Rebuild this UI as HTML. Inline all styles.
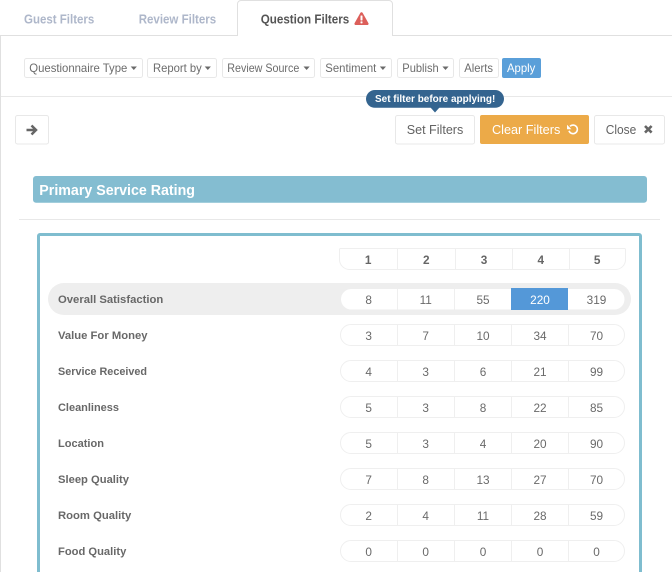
<!DOCTYPE html>
<html lang="en">
<head>
<meta charset="utf-8">
<title>Question Filters</title>
<style>
html,body{margin:0;padding:0;width:672px;height:572px;overflow:hidden;background:#fff}
svg{display:block;position:absolute;left:0;top:0}
text{font-family:"Liberation Sans",Arial,sans-serif}
.tab{font-size:13px;font-weight:700;fill:#aeb7ca}
.f{font-size:11.7px;fill:#6c6c6c}
.b{fill:#fff;stroke:#e8e8e8;stroke-width:1}
.big{font-size:13px;fill:#626262}
.l{font-size:10.8px;font-weight:700;fill:#686868}
.n{font-size:11.8px;fill:#6a6a6a;text-anchor:middle}
.h{font-size:11.8px;font-weight:700;fill:#666;text-anchor:middle}
.s{stroke:#efefef;stroke-width:1}
.p{fill:#fff;stroke:#efefef;stroke-width:1}
</style>
</head>
<body>
<svg width="672" height="572" viewBox="0 0 672 572" xmlns="http://www.w3.org/2000/svg">
<!-- tabs -->
<path d="M0.5 572V35.5H237.5V4a3.5 3.5 0 0 1 3.5-3.5H389a3.5 3.5 0 0 1 3.5 3.5V35.5H672" fill="none" stroke="#e0e0e0"/>
<text class="tab" x="24" y="23.3" textLength="70.3" lengthAdjust="spacingAndGlyphs">Guest Filters</text>
<text class="tab" x="138.7" y="23.3" textLength="77.5" lengthAdjust="spacingAndGlyphs">Review Filters</text>
<text x="260.7" y="23.3" font-size="13" font-weight="700" fill="#555" textLength="88.6" lengthAdjust="spacingAndGlyphs">Question Filters</text>
<path d="M361.500 12.300c.6 0 1 .3 1.300.8l5.600 10c.5.9-.1 1.900-1.100 1.900H355.700c-1 0-1.600-1-1.100-1.900l5.600-10c.3-.5.700-.8 1.300-.8z" fill="#dc5f5a"/>
<rect x="360.500" y="15.500" width="2" height="5" rx=".6" fill="#fff"/>
<rect x="360.500" y="21.400" width="2" height="2" rx=".5" fill="#fff"/>

<!-- filter bar -->
<rect class="b" x="24.500" y="58.500" width="118" height="19" rx="2"/>
<text class="f" x="29.300" y="72" textLength="98" lengthAdjust="spacingAndGlyphs">Questionnaire Type</text>
<path d="M130.700 66.500h6.200l-3.100 3.500z" fill="#6a6a6a"/>
<rect class="b" x="147.500" y="58.500" width="69" height="19" rx="2"/>
<text class="f" x="153" y="72" textLength="48.700" lengthAdjust="spacingAndGlyphs">Report by</text>
<path d="M204.700 66.500h6.200l-3.100 3.500z" fill="#6a6a6a"/>
<rect class="b" x="222.500" y="58.500" width="92" height="19" rx="2"/>
<text class="f" x="227.300" y="72" textLength="72" lengthAdjust="spacingAndGlyphs">Review Source</text>
<path d="M303.500 66.500h6.200l-3.100 3.500z" fill="#6a6a6a"/>
<rect class="b" x="320.500" y="58.500" width="71" height="19" rx="2"/>
<text class="f" x="325.300" y="72" textLength="51" lengthAdjust="spacingAndGlyphs">Sentiment</text>
<path d="M379.800 66.500h6.200l-3.100 3.500z" fill="#6a6a6a"/>
<rect class="b" x="397.500" y="58.500" width="56" height="19" rx="2"/>
<text class="f" x="402.300" y="72" textLength="36.400" lengthAdjust="spacingAndGlyphs">Publish</text>
<path d="M442.400 66.500h6.200l-3.100 3.500z" fill="#6a6a6a"/>
<rect class="b" x="459.500" y="58.500" width="39" height="19" rx="2"/>
<text class="f" x="464.300" y="72" textLength="28.700" lengthAdjust="spacingAndGlyphs">Alerts</text>
<rect x="502" y="58" width="39" height="20" rx="2" fill="#5a9fd9"/>
<text x="507" y="72" font-size="11.700" fill="#fff" textLength="28.300" lengthAdjust="spacingAndGlyphs">Apply</text>

<line x1="1" y1="96.500" x2="672" y2="96.500" stroke="#e8e8e8"/>

<!-- tooltip -->
<rect x="366" y="90" width="138" height="17.800" rx="8.900" fill="#34648f"/>
<path d="M430.500 107.500h9l-4.500 5z" fill="#34648f"/>
<text x="375" y="101.800" font-size="10.300" font-weight="700" fill="#fff" textLength="120.300" lengthAdjust="spacingAndGlyphs">Set filter before applying!</text>

<!-- action buttons -->
<rect class="b" x="15.500" y="115.500" width="33" height="28.500" rx="2"/>
<path d="M31.500 125.500l4.500 4.500-4.500 4.500M26.500 130H35" fill="none" stroke="#666" stroke-width="2.500"/>
<rect class="b" x="395.500" y="115.500" width="79" height="28.500" rx="2"/>
<text class="big" x="406.700" y="134" textLength="56.600" lengthAdjust="spacingAndGlyphs">Set Filters</text>
<rect x="480" y="115" width="109" height="29" rx="2" fill="#ecaa48"/>
<text x="492" y="134" font-size="13" fill="#fff" textLength="68.300" lengthAdjust="spacingAndGlyphs">Clear Filters</text>
<path d="M570 126.300a4.300 4.300 0 1 1-1 4.500" fill="none" stroke="#fff" stroke-width="1.600"/>
<path d="M567 124.800v4.400h4.400z" fill="#fff"/>
<rect class="b" x="594.500" y="115.500" width="70" height="28.500" rx="2"/>
<text class="big" x="605.700" y="134" textLength="30.600" lengthAdjust="spacingAndGlyphs">Close</text>
<path d="M645 126l6.600 6.600M651.600 126l-6.600 6.600" stroke="#666" stroke-width="2.600"/>

<!-- section header -->
<rect x="33" y="176" width="614" height="26.800" rx="3" fill="#84bdd1"/>
<text x="39.300" y="195" font-size="14.500" font-weight="700" fill="#fff" textLength="155.700" lengthAdjust="spacingAndGlyphs">Primary Service Rating</text>
<line x1="19" y1="219.500" x2="660" y2="219.500" stroke="#e8e8e8"/>

<!-- panel -->
<path d="M38.500 575V236a1.500 1.500 0 0 1 1.500-1.500H639a1.500 1.500 0 0 1 1.500 1.500V575" fill="none" stroke="#7fbdcf" stroke-width="3"/>

<!-- table head -->
<path class="p" d="M339.500 249.500a1 1 0 0 1 1-1H624.500a1 1 0 0 1 1 1V259.500a10 10 0 0 1-10 10H349.500a10 10 0 0 1-10-10z"/>
<path class="s" d="M397.500 249V269M455.500 249V269M512.500 249V269M569.500 249V269"/>
<text class="h" x="368.200" y="264">1</text><text class="h" x="426.300" y="264">2</text><text class="h" x="484" y="264">3</text><text class="h" x="540.800" y="264">4</text><text class="h" x="597.200" y="264">5</text>

<!-- highlighted row -->
<rect x="48" y="283" width="583" height="32" rx="16" fill="#eeeeee"/>
<rect x="341" y="289" width="283.500" height="20.500" rx="10.200" fill="#fff"/>
<path class="s" d="M397.500 289V309.500M454.500 289V309.500"/>
<rect x="511" y="288" width="57" height="22" fill="#5498d8"/>
<text class="l" x="58" y="303" textLength="105.300" lengthAdjust="spacingAndGlyphs">Overall Satisfaction</text>
<text class="n" x="368.700" y="304">8</text><text class="n" x="425.700" y="304">11</text><text class="n" x="483" y="304">55</text><text class="n" x="540" y="304" style="fill:#fff">220</text><text class="n" x="596.500" y="304">319</text>

<!-- rows -->
<g>
<rect class="p" x="340.500" y="324.500" width="284" height="21" rx="10.500"/>
<path class="s" d="M397.500 325V345M454.500 325V345M511.500 325V345M568.500 325V345"/>
<text class="l" x="58" y="339" textLength="89.500" lengthAdjust="spacingAndGlyphs">Value For Money</text>
<text class="n" x="368.700" y="340">3</text><text class="n" x="425.700" y="340">7</text><text class="n" x="483" y="340">10</text><text class="n" x="540" y="340">34</text><text class="n" x="596.500" y="340">70</text>
</g>
<g transform="translate(0 36)">
<rect class="p" x="340.500" y="324.500" width="284" height="21" rx="10.500"/>
<path class="s" d="M397.500 325V345M454.500 325V345M511.500 325V345M568.500 325V345"/>
<text class="l" x="58" y="339" textLength="89" lengthAdjust="spacingAndGlyphs">Service Received</text>
<text class="n" x="368.700" y="340">4</text><text class="n" x="425.700" y="340">3</text><text class="n" x="483" y="340">6</text><text class="n" x="540" y="340">21</text><text class="n" x="596.500" y="340">99</text>
</g>
<g transform="translate(0 72)">
<rect class="p" x="340.500" y="324.500" width="284" height="21" rx="10.500"/>
<path class="s" d="M397.500 325V345M454.500 325V345M511.500 325V345M568.500 325V345"/>
<text class="l" x="58" y="339" textLength="61" lengthAdjust="spacingAndGlyphs">Cleanliness</text>
<text class="n" x="368.700" y="340">5</text><text class="n" x="425.700" y="340">3</text><text class="n" x="483" y="340">8</text><text class="n" x="540" y="340">22</text><text class="n" x="596.500" y="340">85</text>
</g>
<g transform="translate(0 108)">
<rect class="p" x="340.500" y="324.500" width="284" height="21" rx="10.500"/>
<path class="s" d="M397.500 325V345M454.500 325V345M511.500 325V345M568.500 325V345"/>
<text class="l" x="58" y="339" textLength="46" lengthAdjust="spacingAndGlyphs">Location</text>
<text class="n" x="368.700" y="340">5</text><text class="n" x="425.700" y="340">3</text><text class="n" x="483" y="340">4</text><text class="n" x="540" y="340">20</text><text class="n" x="596.500" y="340">90</text>
</g>
<g transform="translate(0 144)">
<rect class="p" x="340.500" y="324.500" width="284" height="21" rx="10.500"/>
<path class="s" d="M397.500 325V345M454.500 325V345M511.500 325V345M568.500 325V345"/>
<text class="l" x="58" y="339" textLength="71" lengthAdjust="spacingAndGlyphs">Sleep Quality</text>
<text class="n" x="368.700" y="340">7</text><text class="n" x="425.700" y="340">8</text><text class="n" x="483" y="340">13</text><text class="n" x="540" y="340">27</text><text class="n" x="596.500" y="340">70</text>
</g>
<g transform="translate(0 180)">
<rect class="p" x="340.500" y="324.500" width="284" height="21" rx="10.500"/>
<path class="s" d="M397.500 325V345M454.500 325V345M511.500 325V345M568.500 325V345"/>
<text class="l" x="58" y="339" textLength="73.300" lengthAdjust="spacingAndGlyphs">Room Quality</text>
<text class="n" x="368.700" y="340">2</text><text class="n" x="425.700" y="340">4</text><text class="n" x="483" y="340">11</text><text class="n" x="540" y="340">28</text><text class="n" x="596.500" y="340">59</text>
</g>
<g transform="translate(0 216)">
<rect class="p" x="340.500" y="324.500" width="284" height="21" rx="10.500"/>
<path class="s" d="M397.500 325V345M454.500 325V345M511.500 325V345M568.500 325V345"/>
<text class="l" x="58" y="339" textLength="68.300" lengthAdjust="spacingAndGlyphs">Food Quality</text>
<text class="n" x="368.700" y="340">0</text><text class="n" x="425.700" y="340">0</text><text class="n" x="483" y="340">0</text><text class="n" x="540" y="340">0</text><text class="n" x="596.500" y="340">0</text>
</g>
</svg>
</body>
</html>
